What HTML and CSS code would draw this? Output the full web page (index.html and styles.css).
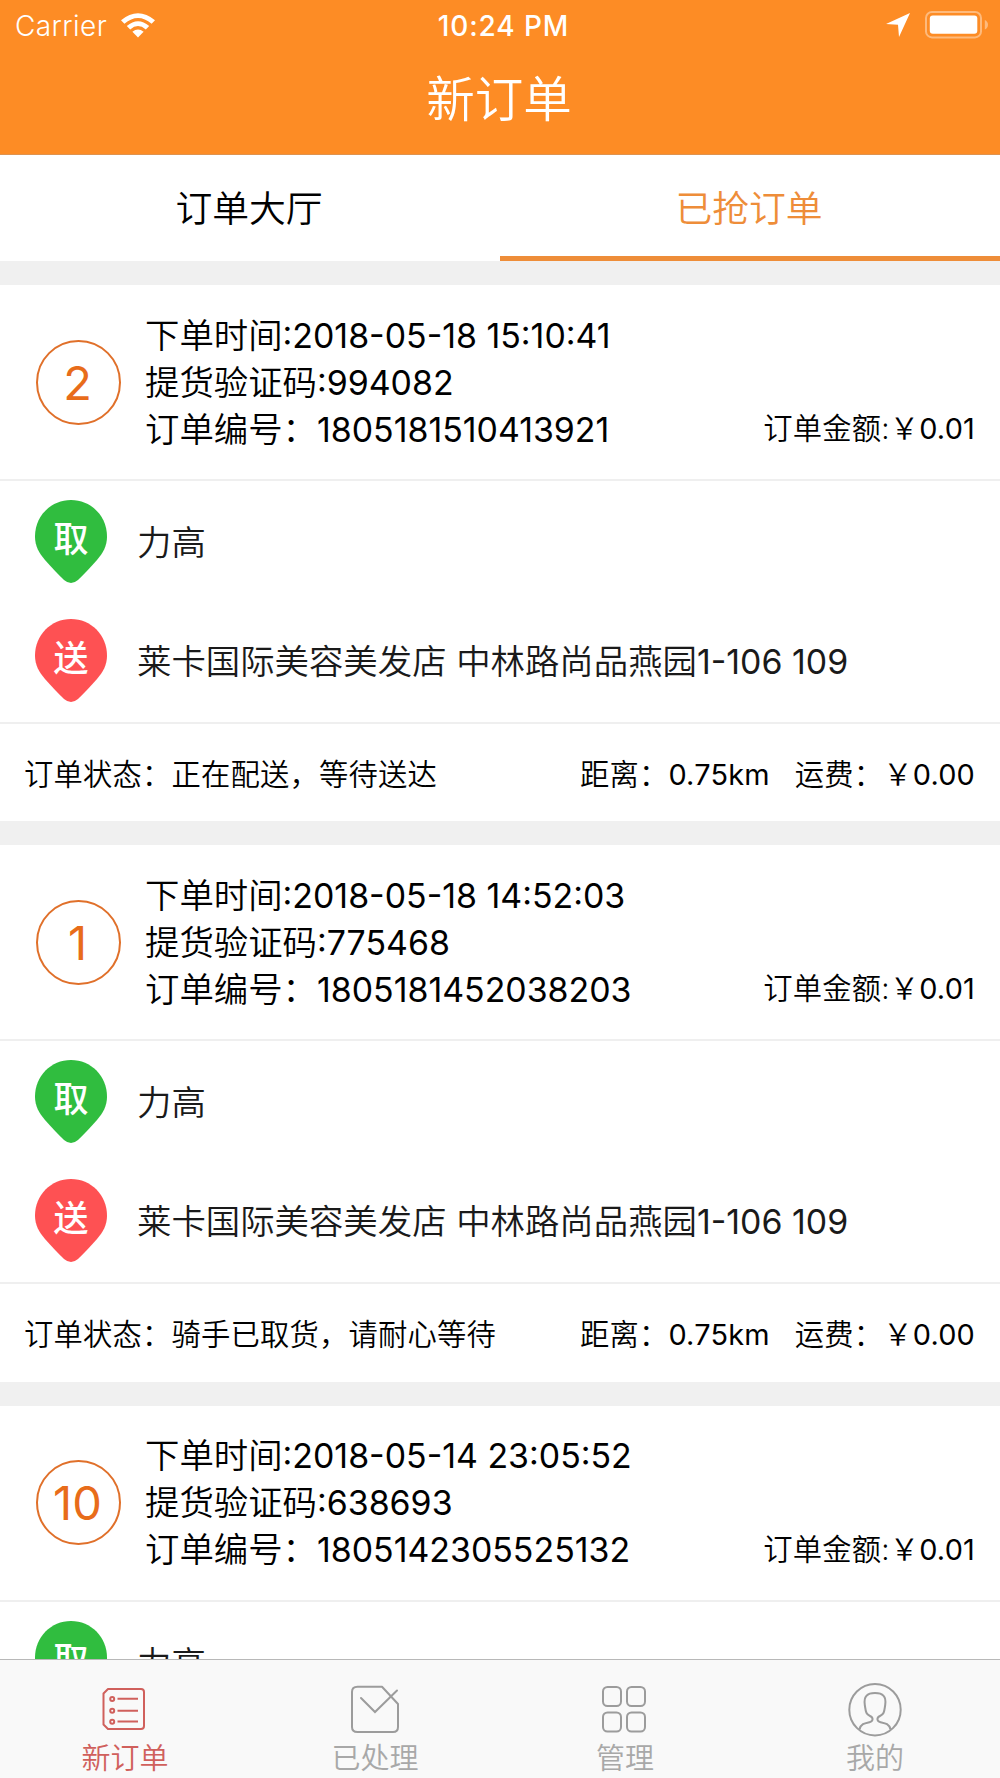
FILE: index.html
```html
<!DOCTYPE html>
<html lang="zh-CN">
<head>
  <meta charset="UTF-8">
  <title>新订单</title>
  <link rel="stylesheet" href="styles.css">
</head>
<body>
  <div class="app">
    <header class="header">
      <div class="status-bar">
        <div class="status-left">
          <span class="carrier">Carrier</span>
          <svg class="wifi" width="34" height="25" viewBox="0 0 34 25" fill="#fff">
            <path d="M0 7.2 Q17 -6.8 34 7.2 L30.6 10.8 Q17 -0.6 3.4 10.8 Z"/>
            <path d="M5.8 13 Q17 3.4 28.2 13 L24.8 16.4 Q17 9.8 9.2 16.4 Z"/>
            <path d="M11.4 18.8 Q17 14.4 22.6 18.8 L17 24.4 Z"/>
          </svg>
        </div>
        <span class="time">10:24 PM</span>
        <div class="status-right">
          <svg width="24" height="24" viewBox="0 0 24 24" fill="#fff"><path d="M24 0 L13 24 L12 11.8 L0 11 Z"/></svg>
          <svg class="battery" width="63" height="28" viewBox="0 0 63 28">
            <rect x="1" y="1" width="55" height="25.4" rx="6" fill="none" stroke="#fff" stroke-opacity=".4" stroke-width="2"/>
            <rect x="4.8" y="4.4" width="47.5" height="18.4" rx="3" fill="#fff"/>
            <path d="M59.8 9 Q63 10.5 63 13.7 Q63 17 59.8 18.5 Z" fill="#fff" fill-opacity=".4"/>
          </svg>
        </div>
      </div>
      <h1>新订单</h1>
    </header>

    <div class="tabs">
      <div class="tab">订单大厅</div>
      <div class="tab active">已抢订单</div>
    </div>

    <div class="orders">
      <div class="order">
        <div class="order-head">
          <div class="number">2</div>
          <div class="info">
            <p>下单时间<span class="num">:2018-05-18 15:10:41</span></p>
            <p>提货验证码<span class="num">:994082</span></p>
            <p>订单编号：<span class="num">1805181510413921</span></p>
          </div>
          <div class="amount">订单金额:<span class="yen">￥</span><span class="num">0.01</span></div>
        </div>
        <div class="places">
          <div class="place">
            <div class="pin pick">
              <svg width="72" height="84" viewBox="0 0 72 84"><path d="M36 0 C16 0 0 16 0 36.5 C0 46 4 53 10 60 C16 67 22 73 29 80 Q36 86 43 80 C50 73 56 67 62 60 C68 53 72 46 72 36.5 C72 16 56 0 36 0 Z"/></svg>
              <span>取</span>
            </div>
            <p>力高</p>
          </div>
          <div class="place">
            <div class="pin send">
              <svg width="72" height="84" viewBox="0 0 72 84"><path d="M36 0 C16 0 0 16 0 36.5 C0 46 4 53 10 60 C16 67 22 73 29 80 Q36 86 43 80 C50 73 56 67 62 60 C68 53 72 46 72 36.5 C72 16 56 0 36 0 Z"/></svg>
              <span>送</span>
            </div>
            <p>莱卡国际美容美发店 中林路尚品燕园<span class="num">1-106 109</span></p>
          </div>
        </div>
        <div class="order-foot">
          <span class="state">订单状态：正在配送，等待送达</span>
          <span class="distance">距离：<span class="num">0.75km</span></span>
          <span class="fee">运费：<span class="yen">￥</span><span class="num">0.00</span></span>
        </div>
      </div>

      <div class="order">
        <div class="order-head">
          <div class="number">1</div>
          <div class="info">
            <p>下单时间<span class="num">:2018-05-18 14:52:03</span></p>
            <p>提货验证码<span class="num">:775468</span></p>
            <p>订单编号：<span class="num">1805181452038203</span></p>
          </div>
          <div class="amount">订单金额:<span class="yen">￥</span><span class="num">0.01</span></div>
        </div>
        <div class="places">
          <div class="place">
            <div class="pin pick">
              <svg width="72" height="84" viewBox="0 0 72 84"><path d="M36 0 C16 0 0 16 0 36.5 C0 46 4 53 10 60 C16 67 22 73 29 80 Q36 86 43 80 C50 73 56 67 62 60 C68 53 72 46 72 36.5 C72 16 56 0 36 0 Z"/></svg>
              <span>取</span>
            </div>
            <p>力高</p>
          </div>
          <div class="place">
            <div class="pin send">
              <svg width="72" height="84" viewBox="0 0 72 84"><path d="M36 0 C16 0 0 16 0 36.5 C0 46 4 53 10 60 C16 67 22 73 29 80 Q36 86 43 80 C50 73 56 67 62 60 C68 53 72 46 72 36.5 C72 16 56 0 36 0 Z"/></svg>
              <span>送</span>
            </div>
            <p>莱卡国际美容美发店 中林路尚品燕园<span class="num">1-106 109</span></p>
          </div>
        </div>
        <div class="order-foot">
          <span class="state">订单状态：骑手已取货，请耐心等待</span>
          <span class="distance">距离：<span class="num">0.75km</span></span>
          <span class="fee">运费：<span class="yen">￥</span><span class="num">0.00</span></span>
        </div>
      </div>

      <div class="order">
        <div class="order-head">
          <div class="number">10</div>
          <div class="info">
            <p>下单时间<span class="num">:2018-05-14 23:05:52</span></p>
            <p>提货验证码<span class="num">:638693</span></p>
            <p>订单编号：<span class="num">1805142305525132</span></p>
          </div>
          <div class="amount">订单金额:<span class="yen">￥</span><span class="num">0.01</span></div>
        </div>
        <div class="places">
          <div class="place">
            <div class="pin pick">
              <svg width="72" height="84" viewBox="0 0 72 84"><path d="M36 0 C16 0 0 16 0 36.5 C0 46 4 53 10 60 C16 67 22 73 29 80 Q36 86 43 80 C50 73 56 67 62 60 C68 53 72 46 72 36.5 C72 16 56 0 36 0 Z"/></svg>
              <span>取</span>
            </div>
            <p>力高</p>
          </div>
        </div>
      </div>
    </div>

    <nav class="tabbar">
      <div class="item active">
        <svg width="54" height="54" viewBox="0 0 54 54" fill="none" stroke="currentColor" stroke-width="2">
          <path d="M10 6 H43 Q46 6 46 9 V43 Q46 46 43 46 H10 L5.5 41.5 V10.5 Z" stroke-linejoin="round"/>
          <circle cx="14.2" cy="16" r="2"/><circle cx="14.2" cy="27.8" r="2"/><circle cx="14.2" cy="38.7" r="2"/>
          <path d="M19.5 15.7 H40 M19.5 27.7 H40 M19.5 38.5 H40"/>
        </svg>
        <span>新订单</span>
      </div>
      <div class="item">
        <svg width="54" height="54" viewBox="0 0 54 54" fill="none" stroke="currentColor" stroke-width="2">
          <path d="M34 3.8 H9.5 Q4 3.8 4 9 V44 Q4 49 9.5 49 H45 Q50 49 50 44 V21 Z" stroke-linejoin="round"/>
          <path d="M13 15 L27 29 L49 7.5" stroke-linecap="round"/>
        </svg>
        <span>已处理</span>
      </div>
      <div class="item">
        <svg width="54" height="54" viewBox="0 0 54 54" fill="none" stroke="currentColor" stroke-width="2">
          <rect x="5" y="4" width="18" height="19" rx="4.5"/><rect x="29" y="4" width="18" height="19" rx="4.5"/>
          <rect x="5" y="29.5" width="18" height="19" rx="4.5"/><rect x="29" y="29.5" width="18" height="19" rx="4.5"/>
        </svg>
        <span>管理</span>
      </div>
      <div class="item">
        <svg width="54" height="54" viewBox="0 0 54 54" fill="none" stroke="currentColor" stroke-width="2">
          <circle cx="27" cy="26.7" r="25.7"/>
          <path d="M11.5 46.5 C12.5 40.5 18 40 21.5 39.2 C25.5 38.2 25.5 34.5 22 33 C17.5 31 17.8 28 16.8 22 C15.5 13.5 19 10 27 10 C35 10 38.5 13.5 37.2 22 C36.2 28 36.5 31 32 33 C28.5 34.5 28.5 38.2 32.5 39.2 C36 40 41.5 40.5 42.5 46.5"/>
        </svg>
        <span>我的</span>
      </div>
    </nav>
  </div>
</body>
</html>
```
FILE: styles.css
```css
* {
  box-sizing: border-box;
}

body {
  margin: 0;
  font-family: Inter, "Noto Sans CJK SC", sans-serif;
  font-weight: 350;
  color: #000;
  background: #fff;
}

p, h1 {
  margin: 0;
  font-weight: inherit;
}

svg {
  display: block;
  flex: none;
}

.app {
  display: flex;
  flex-direction: column;
  width: 1000px;
  height: 1778px;
  overflow: hidden;
}

/* header */
.header {
  flex: none;
  height: 155px;
  background: #fd8c25;
  border-bottom: 1px solid #de9350;
  color: #fff;
}

.status-bar {
  display: grid;
  grid-template-columns: 1fr auto 1fr;
  align-items: center;
  height: 50px;
  padding: 0 12px 0 15px;
  font-size: 28px;
}

.status-left, .status-right {
  display: flex;
  align-items: center;
}

.carrier {
  padding-top: 2px;
  letter-spacing: 0.4px;
}

.wifi {
  margin-left: 14px;
}

.time {
  padding: 2px 0 0 4px;
  font-weight: 500;
  letter-spacing: 0.9px;
}

.status-right {
  justify-content: flex-end;
  gap: 15px;
}

.header h1 {
  padding: 2px 2px 0 0;
  font-size: 48.5px;
  line-height: 96px;
  text-align: center;
}

/* tabs */
.tabs {
  display: flex;
  flex: none;
  height: 106px;
}

.tab {
  flex: 1;
  padding-right: 2px;
  font-size: 36.8px;
  line-height: 107px;
  text-align: center;
}

.tab.active {
  color: #ee8d39;
  border-bottom: 5px solid #ee8d39;
}

/* order list */
.orders {
  flex: 1;
  min-height: 0;
  overflow: hidden;
  background: #f0f0f0;
}

.order {
  height: 536.3px;
  margin-top: 24px;
  background: #fff;
}

.order-head {
  display: flex;
  align-items: center;
  height: 196px;
  padding: 0 25px 0 36px;
  border-bottom: 2px solid #efefef;
}

.number {
  width: 85px;
  height: 85px;
  margin-right: 24px;
  padding-right: 2px;
  border: 2px solid #e0702a;
  border-radius: 50%;
  color: #e86c1a;
  font-size: 47px;
  font-weight: 400;
  line-height: 81px;
  text-align: center;
}

.info {
  flex: 1;
  font-size: 34.4px;
  line-height: 47px;
}

.num {
  font-size: 0.985em;
  font-weight: 400;
}

.amount {
  align-self: flex-end;
  margin-bottom: 27px;
  font-size: 29.3px;
  line-height: 47px;
  letter-spacing: 0.2px;
}

.places {
  display: flex;
  flex-direction: column;
  gap: 34.5px;
  height: 243px;
  padding: 19px 34px 0;
  border-bottom: 2px solid #efefef;
}

.place {
  display: flex;
  align-items: center;
  color: #1a1a1a;
  font-size: 34.4px;
}

.place p {
  padding-bottom: 4px;
}

.pin {
  position: relative;
  margin: 0 30px 0 1px;
}

.pin span {
  position: absolute;
  top: 0;
  left: 0;
  width: 72px;
  color: #fff;
  font-size: 35px;
  font-weight: 500;
  line-height: 78px;
  text-align: center;
}

.pick {
  fill: #30bd3f;
}

.send {
  fill: #fe5153;
}

.order-foot {
  display: flex;
  align-items: center;
  height: 97px;
  padding: 0 25px 2px 24px;
  font-size: 29.3px;
  letter-spacing: 0.2px;
}

.state {
  flex: 1;
}

.fee {
  margin-left: 25px;
}

/* bottom bar */
.tabbar {
  display: flex;
  flex: none;
  height: 119px;
  background: #f9f9f9;
  border-top: 1px solid #b8b8b8;
}

.item {
  display: flex;
  flex: 1;
  flex-direction: column;
  align-items: center;
  padding-top: 23px;
  color: #9c9c9c;
}

.item span {
  color: #a8a8a8;
  font-size: 29px;
  line-height: 44px;
}

.item.active, .item.active span {
  color: #d0605c;
}
```
